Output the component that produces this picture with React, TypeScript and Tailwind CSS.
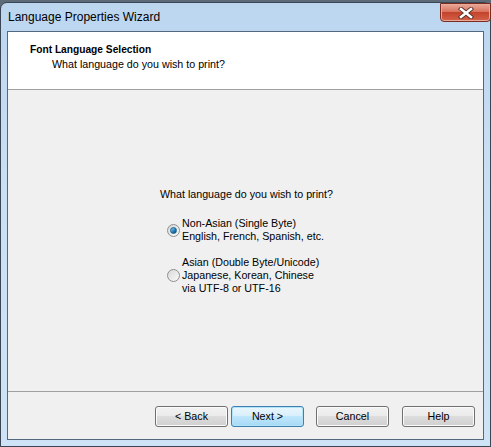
import React from 'react';

const ui = { fontFamily: '"Liberation Sans", Arial, sans-serif' };

function Radio({ checked }: { checked?: boolean }) {
  return (
    <span className="relative flex h-[13px] w-[13px] shrink-0 items-center justify-center rounded-full border border-[#8e8f8f] bg-gradient-to-br from-[#d9d9d9] to-[#fafafa]">
      {checked && (
        <span className="h-[7px] w-[7px] rounded-full border border-[#1b5e86] bg-gradient-to-br from-[#8fd3f7] via-[#2c8bc9] to-[#0d3f6e]" />
      )}
    </span>
  );
}

function Button({ label, isDefault }: { label: string; isDefault?: boolean }) {
  return (
    <div
      className={
        'flex h-[21px] w-[73px] items-center justify-center rounded-[3px] border text-[10.7px] text-black ' +
        (isDefault
          ? 'border-[#3c7fb1] bg-[linear-gradient(#eaf6fd_0%,#d9f0fc_45%,#bee6fd_50%,#a7d9f5_100%)] shadow-[inset_0_0_0_1px_#b3e3f9]'
          : 'border-[#707070] bg-[linear-gradient(#f2f2f2_0%,#ebebeb_45%,#dddddd_50%,#cfcfcf_100%)] shadow-[inset_0_0_0_1px_#fbfbfb]')
      }
    >
      {label}
    </div>
  );
}

export default function App() {
  return (
    <div className="h-[447px] w-[491px] overflow-hidden bg-[#5d6a78]" style={ui}>
      <div className="mt-[2px] flex h-[445px] w-[491px] flex-col rounded-t-[7px] border border-[#3a4654] bg-[linear-gradient(180deg,#bcd6f0_0%,#c9dff4_40%,#cfe3f6_100%)]">
        {/* title bar */}
        <div className="relative flex h-[28px] shrink-0 items-center pl-[7px]">
          <span className="text-[12px] text-black">Language Properties Wizard</span>
          <div className="absolute right-[-1px] top-[0px] flex h-[19px] w-[51px] items-center justify-center rounded-b-[4px] border border-[#7a2c23] bg-[linear-gradient(#e9a99a_0%,#d9735f_45%,#c4432b_50%,#d3624b_100%)] shadow-[inset_0_0_0_1px_#eba998]">
            <svg width="16" height="12" viewBox="0 0 16 12">
              <path d="M3 2 L13 10 M13 2 L3 10" stroke="#4d2a24" strokeWidth="4.2" strokeLinecap="square" />
              <path d="M3 2 L13 10 M13 2 L3 10" stroke="#ffffff" strokeWidth="2.6" strokeLinecap="square" />
            </svg>
          </div>
        </div>

        {/* client area */}
        <div className="mx-[6px] flex h-[409px] flex-col border border-[#53677e] bg-[#f0f0f0]">
          <div className="flex h-[58px] shrink-0 flex-col border-b border-[#a0a0a0] bg-white pl-[22px] pt-[11px]">
            <div className="text-[10.2px] font-bold leading-[13px] text-black">Font Language Selection</div>
            <div className="pl-[22px] pt-[2px] text-[10.7px] leading-[13px] text-black">What language do you wish to print?</div>
          </div>

          <div className="flex flex-1 flex-col border-b border-[#a0a0a0] pl-[152px] pt-[98px] text-[10.7px] leading-[13px] text-black">
            <div>What language do you wish to print?</div>
            <div className="mt-[16px] flex items-center gap-[2px] pl-[7px]">
              <Radio checked />
              <div>
                <div>Non-Asian (Single Byte)</div>
                <div>English, French, Spanish, etc.</div>
              </div>
            </div>
            <div className="mt-[13px] flex items-center gap-[2px] pl-[7px]">
              <Radio />
              <div>
                <div>Asian (Double Byte/Unicode)</div>
                <div>Japanese, Korean, Chinese</div>
                <div>via UTF-8 or UTF-16</div>
              </div>
            </div>
          </div>

          <div className="flex h-[47px] shrink-0 items-start pl-[147px] pt-[14px]">
            <Button label="< Back" />
            <div className="ml-[3px]">
              <Button label="Next >" isDefault />
            </div>
            <div className="ml-[12px]">
              <Button label="Cancel" />
            </div>
            <div className="ml-[13px]">
              <Button label="Help" />
            </div>
          </div>
        </div>
      </div>
    </div>
  );
}
